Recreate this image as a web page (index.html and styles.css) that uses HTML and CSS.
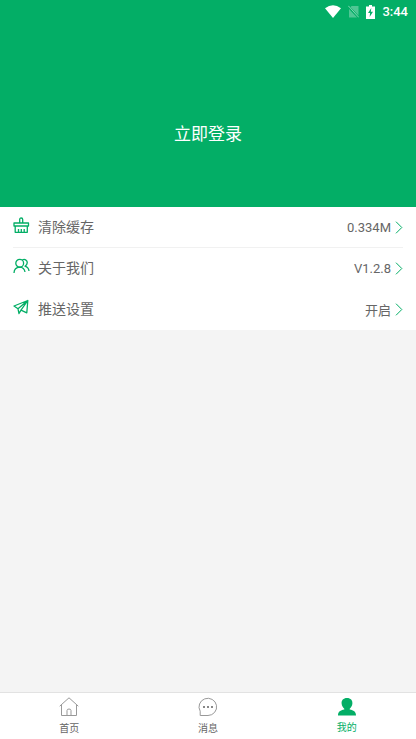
FILE: index.html
```html
<!DOCTYPE html>
<html lang="zh-CN">
<head>
<meta charset="utf-8">
<meta name="viewport" content="width=device-width, initial-scale=1">
<title>我的</title>
<link rel="stylesheet" href="styles.css">
</head>
<body>
<header class="hero">
  <div class="status">
    <svg class="wifi" width="16" height="13" viewBox="0 0 16 13"><path d="M0 3.2Q8-2.8 16 3.2L8 13Z" fill="#fff"/></svg>
    <svg class="sim" width="11" height="13" viewBox="0 0 11 13"><path d="M3.5 1H10.5V10.5L2.6 2.2ZM1 4L9 12.5H1Z" fill="#fff" opacity=".3"/><path d="M.3.8L10.8 12.4" stroke="#fff" opacity=".5"/></svg>
    <svg class="battery" width="9" height="14" viewBox="0 0 9 14"><path d="M3 0H6V1.5H9V14H0V1.5H3Z" fill="#fff"/><path d="M5.3 3L2 8H4.1L3.6 12L7 6.8H4.8Z" fill="#03ae66"/></svg>
    <span class="clock">3:44</span>
  </div>
  <a class="login" href="#login">立即登录</a>
</header>
<main class="content">
  <nav class="menu" aria-label="设置">
    <a class="row" href="#cache">
      <svg class="icon" width="17" height="17" viewBox="0 0 17 17"><path d="M6.7 6V2.5Q6.7 1 8.2 1T9.7 2.5V6M1 6H15.5V9H1ZM2.2 9V15.3H14.3V9M5.5 12V15M8.3 12V15M11.2 12V15"/></svg>
      <span class="label">清除缓存</span><span class="value">0.334M</span>
      <svg class="chevron" width="8" height="13" viewBox="0 0 8 13"><path d="M1 .7L6.8 6.5L1 12.3"/></svg>
    </a>
    <a class="row" href="#about">
      <svg class="icon" width="17" height="17" viewBox="0 0 17 17"><circle cx="6.7" cy="5.2" r="3.9"/><path d="M1 15Q1.2 9.4 6.7 9.1Q11.3 9.4 12 14M9.3 1.8Q12.2.4 13.9 3.2Q15.1 6.2 12 8.2Q15.6 9.3 16 13"/></svg>
      <span class="label">关于我们</span><span class="value">V1.2.8</span>
      <svg class="chevron" width="8" height="13" viewBox="0 0 8 13"><path d="M1 .7L6.8 6.5L1 12.3"/></svg>
    </a>
    <a class="row" href="#push">
      <svg class="icon" width="17" height="17" viewBox="0 0 17 17"><path d="M14.8 1.5L1 7L5 9.8L14.8 1.5L13.8 13.8L8 11.2L14.8 1.5M5 9.8L6 14.5L8 11.2"/></svg>
      <span class="label">推送设置</span><span class="value">开启</span>
      <svg class="chevron" width="8" height="13" viewBox="0 0 8 13"><path d="M1 .7L6.8 6.5L1 12.3"/></svg>
    </a>
  </nav>
</main>
<nav class="tabs" aria-label="主导航">
  <a class="tab" href="#home">
    <svg width="20" height="20" viewBox="0 0 20 20"><path d="M.7 9.2L10 .8L19.3 9.2M2.5 8V18.5H17.5V8M8 18.5V13.5Q8 12 10 12T12 13.5V18.5"/></svg>
    <span>首页</span>
  </a>
  <a class="tab" href="#messages">
    <svg width="20" height="20" viewBox="0 0 20 20"><path d="M2.2 18.5V14.2A8.8 8.6 0 1 1 10 18.5Z"/><path class="dots" d="M5 9H7V11H5ZM9 9H11V11H9ZM13 9H15V11H13Z"/></svg>
    <span>消息</span>
  </a>
  <a class="tab active" href="#mine" aria-current="page">
    <svg width="20" height="20" viewBox="0 0 20 20"><path class="person" d="M10 1C13.7 1 15.7 3.4 15.4 6.6C15.2 9 14 10.7 12.7 11.7V12.6C16.5 13.5 19 14.5 19 18.5H1C1 14.5 3.5 13.5 7.3 12.6V11.7C6 10.7 4.8 9 4.6 6.6C4.3 3.4 6.3 1 10 1Z"/></svg>
    <span>我的</span>
  </a>
</nav>
</body>
</html>
```
FILE: styles.css
```css
* {
  box-sizing: border-box;
}

body {
  margin: 0;
  min-height: 100vh;
  display: flex;
  flex-direction: column;
  background: #f4f4f4;
  color: #666;
  font-family: Roboto, "Noto Sans CJK SC", sans-serif;
}

a {
  color: inherit;
  text-decoration: none;
}

.hero {
  display: flex;
  flex-direction: column;
  align-items: center;
  padding-bottom: 61px;
  background: #03ae66;
  color: #fff;
}

.status {
  align-self: stretch;
  display: flex;
  align-items: center;
  justify-content: flex-end;
  gap: 7px;
  height: 23px;
  padding-right: 8px;
}

.clock {
  font-size: 13px;
  font-weight: 500;
  line-height: 23px;
}

.login {
  margin-top: 99px;
  font-size: 17px;
  line-height: 24px;
}

.content {
  flex: 1;
}

.menu {
  background: #fff;
  padding: 0 13px;
}

.row {
  display: flex;
  align-items: center;
  height: 41px;
}

.row:first-child {
  border-bottom: 1px solid #f1f1f1;
}

.icon {
  margin: 0 8px 4px 0;
  fill: none;
  stroke: #03ae66;
  stroke-width: 1.3;
  stroke-linejoin: round;
}

.label {
  flex: 1;
  padding-bottom: 1px;
  font-size: 14px;
  line-height: 20px;
}

.value {
  margin-right: 4px;
  font-size: 13px;
}

.chevron {
  fill: none;
  stroke: #03ae66;
}

.tabs {
  display: flex;
  height: 47px;
  padding-top: 4px;
  background: #fff;
  border-top: 1px solid #e2e2e2;
}

.tab {
  flex: 1;
  display: flex;
  flex-direction: column;
  align-items: center;
  gap: 4px;
  font-size: 10px;
  line-height: 15px;
}

.tab svg {
  fill: none;
  stroke: #999;
}

.tab .dots {
  fill: #888;
  stroke: none;
}

.tab .person {
  fill: #03ae66;
  stroke: none;
}

.active {
  gap: 3px;
  color: #03ae66;
}
```
